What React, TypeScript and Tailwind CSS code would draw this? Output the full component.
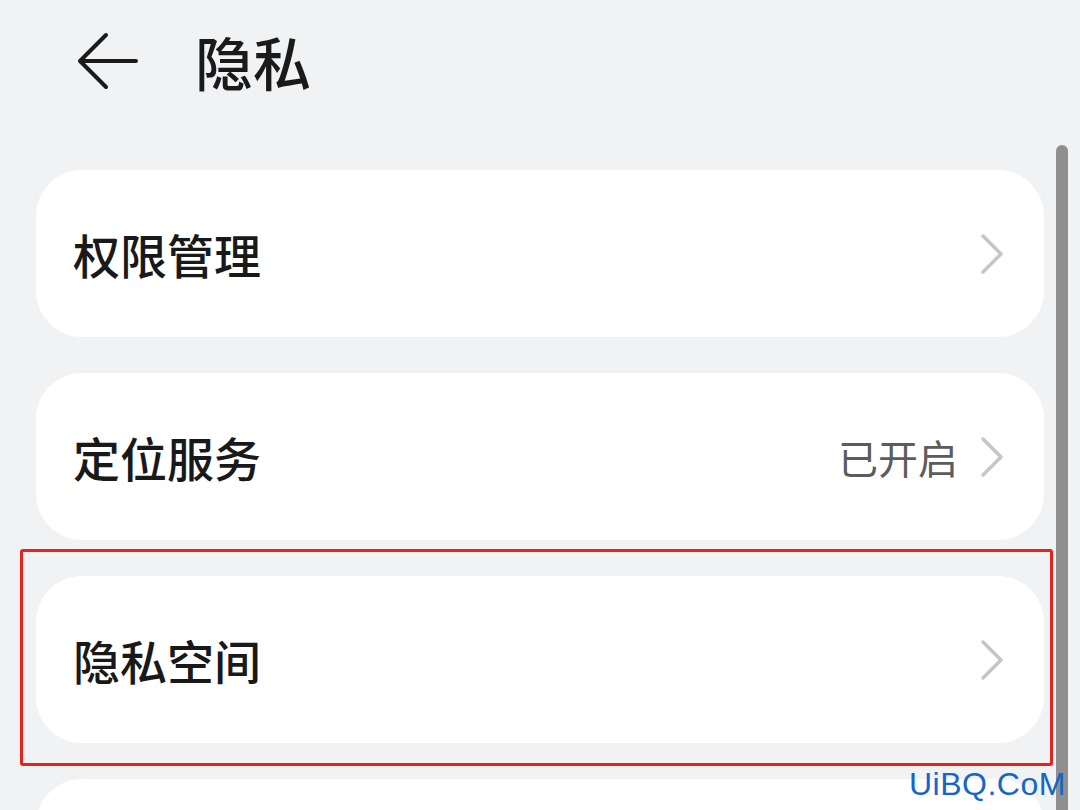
const font = { fontFamily: '"Noto Sans CJK SC", "Noto Sans", sans-serif' };

const Chevron = () => (
    <svg width="24" height="42" viewBox="0 0 24 42" fill="none" className="shrink-0">
        <path d="M3 3 L21 21 L3 39" stroke="#c6c6c6" strokeWidth="3.5" strokeLinecap="round" strokeLinejoin="round" />
    </svg>
);

const BackArrow = () => (
    <svg width="62" height="58" viewBox="0 0 62 58" fill="none">
        <path d="M29 3 L3 29 L29 55 M3 29 L59 29" stroke="#1a1a1a" strokeWidth="4" strokeLinecap="round" strokeLinejoin="round" />
    </svg>
);

const Row = ({ label, value }: { label: string; value?: string }) => (
    <div className="flex items-center h-[167px] bg-white rounded-[46px] pl-[37px] pr-[40px]">
        <span className="flex-1 text-[47px] font-medium text-[#191919] leading-none">{label}</span>
        {value && <span className="text-[40px] text-[#5c5c5c] leading-none mr-[22px]">{value}</span>}
        <Chevron />
    </div>
);

export default function App() {
    return (
        <div className="relative w-[1080px] h-[810px] overflow-hidden bg-[#f1f2f4]" style={font}>
            <div className="flex items-center h-[122px] pl-[77px]">
                <BackArrow />
                <h1 className="ml-[56px] text-[58px] font-medium text-[#1a1a1a] leading-none">隐私</h1>
            </div>

            <div className="flex flex-col gap-[36px] mt-[48px] ml-[36px] w-[1008px]">
                <Row label="权限管理" />
                <Row label="定位服务" value="已开启" />
                <div className="relative">
                    <Row label="隐私空间" />
                    <div className="absolute -left-[16px] -top-[27px] -right-[9px] -bottom-[23px] border-[3px] border-[#e4231c] rounded-[3px]" />
                </div>
                <div className="h-[167px] bg-white rounded-[46px]" />
            </div>

            <div className="absolute left-[1056px] top-[145px] w-[12px] h-[700px] rounded-full bg-[#8f8f8f]" />

            <div className="absolute left-[909px] top-[762px] text-[32px] text-[#1666c5] leading-[44px] tracking-[0.5px]" style={{ fontFamily: '"Liberation Sans", sans-serif' }}>
                UiBQ.CoM
            </div>
        </div>
    );
}
